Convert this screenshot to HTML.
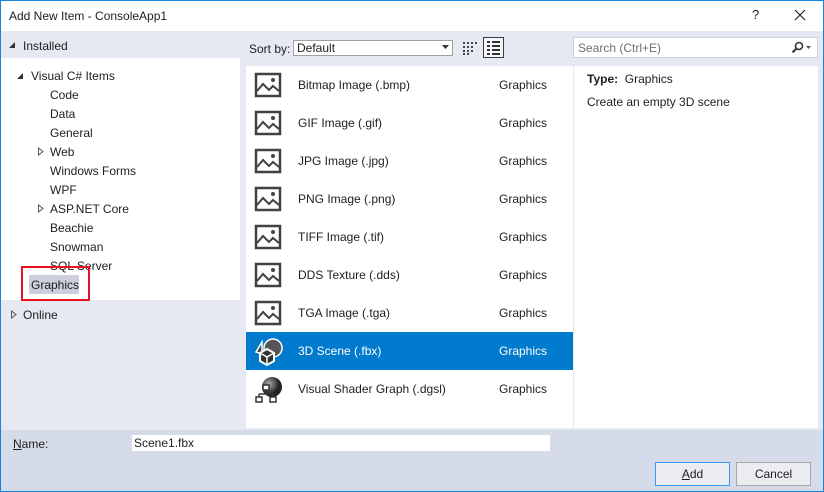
<!DOCTYPE html>
<html><head><style>
*{margin:0;padding:0;box-sizing:border-box}
body{width:824px;height:492px;overflow:hidden;font-family:"Segoe UI","Liberation Sans",sans-serif;font-size:12px;color:#1e1e1e;background:#fff}
.win{position:absolute;left:0;top:0;width:824px;height:492px;background:#e6e9f2}
.frame{position:absolute;left:0;top:0;width:824px;height:492px;border:1px solid #1883d7;pointer-events:none}
.abs{position:absolute}
.title{left:0;top:0;width:824px;height:31px;background:#fff}
.t{position:absolute;white-space:nowrap;margin-top:1px}
.row{position:absolute;left:246px;width:327px;height:38px}
.row.sel{background:#007acc;color:#fff}
.row .n{position:absolute;left:52px;top:12px}
.row .c{position:absolute;left:253px;top:12px}
.row svg{position:absolute;left:8px;top:6px}
</style></head><body>
<div class="win">
<div class="abs title"></div>
<div class="t" style="left:9px;top:8px;font-size:12px">Add New Item - ConsoleApp1</div>
<div class="t" style="left:752px;top:6px;font-size:13px">?</div>
<svg class="abs" style="left:794px;top:9px" width="12" height="12"><path d="M1 1L11 11M11 1L1 11" stroke="#222" stroke-width="1.2"/></svg>

<svg class="abs" style="left:8px;top:41px" width="8" height="8"><path d="M7 1L7 7L1 7Z" fill="#333"/></svg>
<div class="t" style="left:23px;top:38px">Installed</div>
<div class="abs" style="left:1px;top:58px;width:239px;height:242px;background:#fff"></div>
<svg class="abs" style="left:16px;top:72px" width="8" height="8"><path d="M7 1L7 7L1 7Z" fill="#333"/></svg>
<div class="t" style="left:31px;top:68px">Visual C# Items</div>
<div class="t" style="left:50px;top:87px">Code</div>
<div class="t" style="left:50px;top:106px">Data</div>
<div class="t" style="left:50px;top:125px">General</div>
<svg class="abs" style="left:37px;top:147px" width="8" height="9"><path d="M1.5 1L6 4.5L1.5 8Z" fill="none" stroke="#555"/></svg>
<div class="t" style="left:50px;top:144px">Web</div>
<div class="t" style="left:50px;top:163px">Windows Forms</div>
<div class="t" style="left:50px;top:182px">WPF</div>
<svg class="abs" style="left:37px;top:204px" width="8" height="9"><path d="M1.5 1L6 4.5L1.5 8Z" fill="none" stroke="#555"/></svg>
<div class="t" style="left:50px;top:201px">ASP.NET Core</div>
<div class="t" style="left:50px;top:220px">Beachie</div>
<div class="t" style="left:50px;top:239px">Snowman</div>
<div class="t" style="left:50px;top:258px">SQL Server</div>
<div class="abs" style="left:29px;top:275px;width:50px;height:19px;background:#cccedb"></div>
<div class="t" style="left:31px;top:277px">Graphics</div>
<div class="abs" style="left:21px;top:266px;width:69px;height:35px;border:2px solid #e81123"></div>
<svg class="abs" style="left:10px;top:310px" width="8" height="9"><path d="M1.5 1L6 4.5L1.5 8Z" fill="none" stroke="#555"/></svg>
<div class="t" style="left:23px;top:307px">Online</div>

<div class="t" style="left:249px;top:41px">Sort by:</div>
<div class="abs" style="left:293px;top:40px;width:160px;height:16px;border:1px solid #a0a0a0;background:#fff"></div>
<div class="t" style="left:297px;top:40px">Default</div>
<svg class="abs" style="left:442px;top:45px" width="7" height="4"><path d="M0 0H7L3.5 4Z" fill="#333"/></svg>
<svg class="abs" style="left:462px;top:40px" width="16" height="16"><g fill="#444"><rect x="1" y="2" width="2" height="2"/><rect x="5" y="2" width="2" height="2"/><rect x="9" y="2" width="2" height="2"/><rect x="13" y="2" width="2" height="2"/><rect x="1" y="6" width="2" height="2"/><rect x="5" y="6" width="2" height="2"/><rect x="9" y="6" width="2" height="2"/><rect x="1" y="10" width="2" height="2"/><rect x="5" y="10" width="2" height="2"/><rect x="9" y="10" width="2" height="2"/><rect x="1" y="13" width="2" height="2"/><rect x="5" y="13" width="2" height="2"/></g></svg>
<div class="abs" style="left:483px;top:37px;width:21px;height:21px;border:1px solid #3c3c3c;background:#f5f6fa"></div>
<svg class="abs" style="left:486px;top:40px" width="16" height="16"><g fill="#333"><rect x="1" y="1" width="3" height="2"/><rect x="6" y="1" width="8" height="2"/><rect x="1" y="5" width="3" height="2"/><rect x="6" y="5" width="8" height="2"/><rect x="1" y="9" width="3" height="2"/><rect x="6" y="9" width="8" height="2"/><rect x="1" y="13" width="3" height="2"/><rect x="6" y="13" width="8" height="2"/></g></svg>

<div class="abs" style="left:573px;top:37px;width:245px;height:21px;border:1px solid #ccced8;background:#fff"></div>
<div class="t" style="left:578px;top:40px;color:#717171">Search (Ctrl+E)</div>
<svg class="abs" style="left:791px;top:41px" width="22" height="12"><circle cx="8" cy="5" r="3.5" fill="none" stroke="#333" stroke-width="1.6"/><path d="M5.5 7.5L1.5 11.5" stroke="#333" stroke-width="2"/><path d="M15 5H20L17.5 8Z" fill="#555"/></svg>

<div class="abs" style="left:246px;top:66px;width:327px;height:362px;background:#fff"></div>
<div class="abs" style="left:573px;top:66px;width:245px;height:362px;background:#fff;border-left:1px solid #e6e9f2"></div>

<div class="row" style="top:66px"><svg width="28" height="26"><rect x="2" y="2" width="24" height="22" fill="none" stroke="#424242" stroke-width="2.5"/><circle cx="19" cy="8" r="2" fill="#424242"/><path d="M3 19L9 12L15 18L19 14L25 19" fill="none" stroke="#424242" stroke-width="2"/></svg><span class="n">Bitmap Image (.bmp)</span><span class="c">Graphics</span></div>
<div class="row" style="top:104px"><svg width="28" height="26"><rect x="2" y="2" width="24" height="22" fill="none" stroke="#424242" stroke-width="2.5"/><circle cx="19" cy="8" r="2" fill="#424242"/><path d="M3 19L9 12L15 18L19 14L25 19" fill="none" stroke="#424242" stroke-width="2"/></svg><span class="n">GIF Image (.gif)</span><span class="c">Graphics</span></div>
<div class="row" style="top:142px"><svg width="28" height="26"><rect x="2" y="2" width="24" height="22" fill="none" stroke="#424242" stroke-width="2.5"/><circle cx="19" cy="8" r="2" fill="#424242"/><path d="M3 19L9 12L15 18L19 14L25 19" fill="none" stroke="#424242" stroke-width="2"/></svg><span class="n">JPG Image (.jpg)</span><span class="c">Graphics</span></div>
<div class="row" style="top:180px"><svg width="28" height="26"><rect x="2" y="2" width="24" height="22" fill="none" stroke="#424242" stroke-width="2.5"/><circle cx="19" cy="8" r="2" fill="#424242"/><path d="M3 19L9 12L15 18L19 14L25 19" fill="none" stroke="#424242" stroke-width="2"/></svg><span class="n">PNG Image (.png)</span><span class="c">Graphics</span></div>
<div class="row" style="top:218px"><svg width="28" height="26"><rect x="2" y="2" width="24" height="22" fill="none" stroke="#424242" stroke-width="2.5"/><circle cx="19" cy="8" r="2" fill="#424242"/><path d="M3 19L9 12L15 18L19 14L25 19" fill="none" stroke="#424242" stroke-width="2"/></svg><span class="n">TIFF Image (.tif)</span><span class="c">Graphics</span></div>
<div class="row" style="top:256px"><svg width="28" height="26"><rect x="2" y="2" width="24" height="22" fill="none" stroke="#424242" stroke-width="2.5"/><circle cx="19" cy="8" r="2" fill="#424242"/><path d="M3 19L9 12L15 18L19 14L25 19" fill="none" stroke="#424242" stroke-width="2"/></svg><span class="n">DDS Texture (.dds)</span><span class="c">Graphics</span></div>
<div class="row" style="top:294px"><svg width="28" height="26"><rect x="2" y="2" width="24" height="22" fill="none" stroke="#424242" stroke-width="2.5"/><circle cx="19" cy="8" r="2" fill="#424242"/><path d="M3 19L9 12L15 18L19 14L25 19" fill="none" stroke="#424242" stroke-width="2"/></svg><span class="n">TGA Image (.tga)</span><span class="c">Graphics</span></div>
<div class="row sel" style="top:332px"><svg width="30" height="28"><circle cx="19" cy="10" r="9" fill="#555" stroke="#fff" stroke-width="1.5"/><path d="M8 4L2 14L8 16Z" fill="#444" stroke="#fff" stroke-width="1.5"/><path d="M13 11L20 15V23L13 27L6 23V15Z" fill="#333" stroke="#fff" stroke-width="2"/><path d="M6 15L13 19L20 15M13 19V27" fill="none" stroke="#fff" stroke-width="1.5"/></svg><span class="n">3D Scene (.fbx)</span><span class="c">Graphics</span></div>
<div class="row" style="top:370px"><svg width="30" height="28"><defs><radialGradient id="g" cx="0.35" cy="0.35"><stop offset="0" stop-color="#aaa"/><stop offset="1" stop-color="#222"/></radialGradient></defs><circle cx="18" cy="11" r="10" fill="url(#g)"/><rect x="9" y="9" width="6" height="5" fill="#fff" stroke="#333" stroke-width="1.5"/><path d="M12 14V18M5 18H19M5 18V21M19 18V21" fill="none" stroke="#333" stroke-width="1.5"/><rect x="2" y="21" width="6" height="5" fill="#fff" stroke="#333" stroke-width="1.5"/><rect x="16" y="21" width="6" height="5" fill="#fff" stroke="#333" stroke-width="1.5"/></svg><span class="n">Visual Shader Graph (.dgsl)</span><span class="c">Graphics</span></div>

<div class="t" style="left:587px;top:71px"><b>Type:</b>&nbsp; Graphics</div>
<div class="t" style="left:587px;top:94px">Create an empty 3D scene</div>

<div class="abs" style="left:0;top:430px;width:824px;height:62px;background:#d6dbe9"></div>
<div class="t" style="left:13px;top:436px"><u>N</u>ame:</div>
<div class="abs" style="left:132px;top:435px;width:418px;height:16px;background:#fff"></div>
<div class="t" style="left:134px;top:435px">Scene1.fbx</div>
<div class="abs" style="left:655px;top:462px;width:75px;height:24px;border:1px solid #3399ff;background:#ecedf1;text-align:center;line-height:22px"><u>A</u>dd</div>
<div class="abs" style="left:736px;top:462px;width:75px;height:24px;border:1px solid #a8a8a8;background:#ecedf1;text-align:center;line-height:22px">Cancel</div>
</div>
<div class="frame"></div>
</body></html>
